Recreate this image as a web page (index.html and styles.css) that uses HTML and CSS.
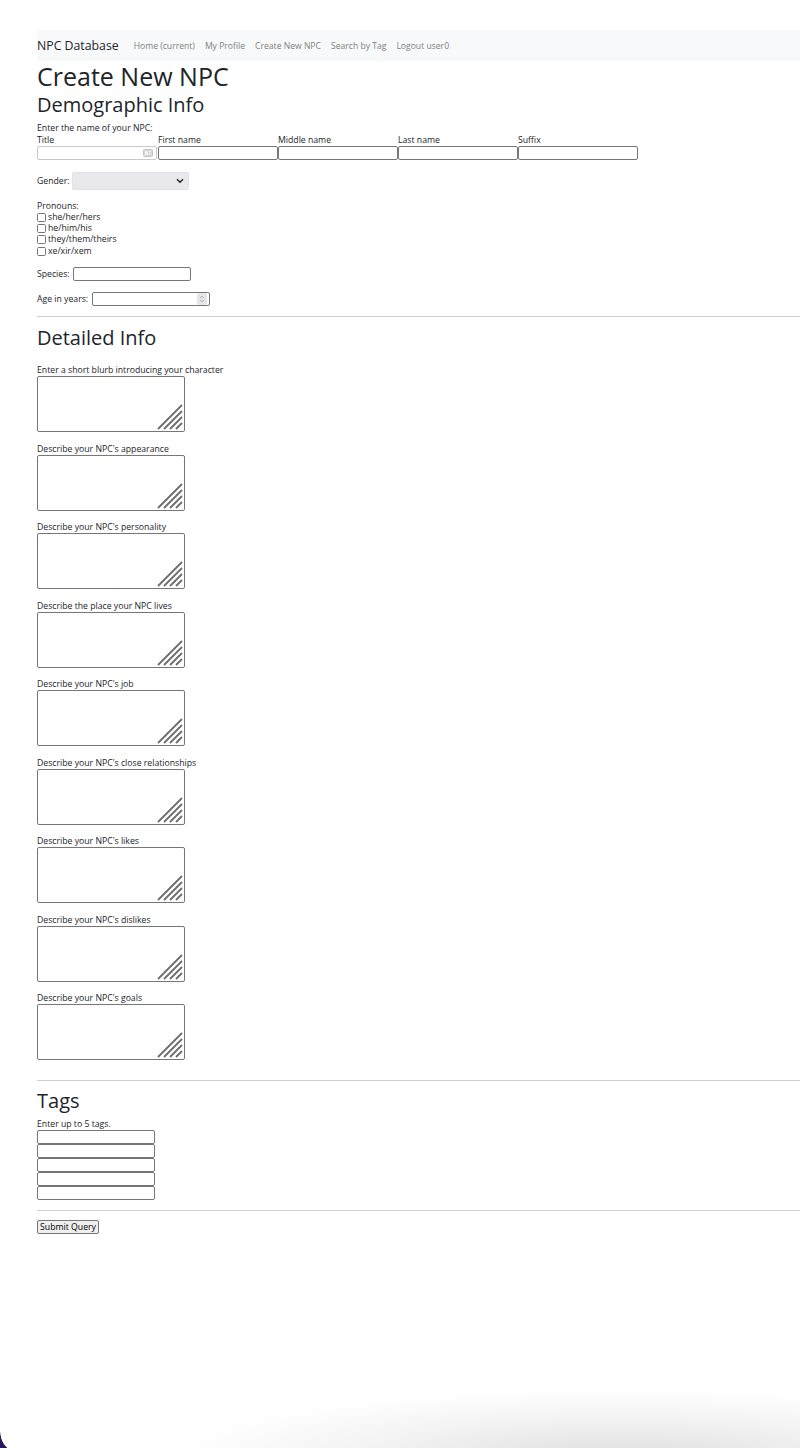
FILE: index.html
```html
<!DOCTYPE html>
<html lang="en">
<head>
<meta charset="utf-8">
<title>Create New NPC</title>
<link rel="stylesheet" href="styles.css">
</head>
<body>
<div class="page">
  <nav class="navbar">
    <span class="brand">NPC Database</span>
    <span class="nav-link">Home (current)</span>
    <span class="nav-link">My Profile</span>
    <span class="nav-link">Create New NPC</span>
    <span class="nav-link">Search by Tag</span>
    <span class="nav-link">Logout user0</span>
  </nav>

  <h1 class="title">Create New NPC</h1>
  <h2 class="section first">Demographic Info</h2>

  <div class="line">Enter the name of your NPC:</div>
  <div class="name-grid">
    <div class="name-col">
      <div class="line">Title</div>
      <div class="field title-field">
        <svg class="autofill" width="10" height="8" viewBox="0 0 10 8"><rect x="0.5" y="0.5" width="9" height="7" rx="1" fill="#d8d8d8" stroke="#c4c4c4"/><rect x="2" y="2" width="3" height="4" fill="#f2f2f2"/><rect x="6" y="2" width="2" height="1" fill="#f2f2f2"/><rect x="6" y="4" width="2" height="1" fill="#f2f2f2"/></svg>
      </div>
    </div>
    <div class="name-col"><div class="line">First name</div><div class="field name"></div></div>
    <div class="name-col"><div class="line">Middle name</div><div class="field name"></div></div>
    <div class="name-col"><div class="line">Last name</div><div class="field name"></div></div>
    <div class="name-col"><div class="line">Suffix</div><div class="field name"></div></div>
  </div>

  <div class="row gender-row">
    <span class="row-label">Gender:</span>
    <div class="select">
      <svg class="chevron" width="8" height="6" viewBox="0 0 8 6"><path d="M1 1.2 L4 4.2 L7 1.2" fill="none" stroke="#222" stroke-width="1.4"/></svg>
    </div>
  </div>

  <div class="pronouns">
    <div class="pline">Pronouns:</div>
    <div class="pline"><span class="check"></span>she/her/hers</div>
    <div class="pline"><span class="check"></span>he/him/his</div>
    <div class="pline"><span class="check"></span>they/them/theirs</div>
    <div class="pline"><span class="check"></span>xe/xir/xem</div>
  </div>

  <div class="row species-row">
    <span class="row-label">Species:</span>
    <div class="field short"></div>
  </div>

  <div class="row age-row">
    <span class="row-label">Age in years:</span>
    <div class="field short number">
      <svg class="spinner" width="10" height="12" viewBox="0 0 10 12"><rect x="0" y="0" width="10" height="12" rx="2" fill="#e6e6ea"/><path d="M3.2 5 L5 3.2 L6.8 5" fill="none" stroke="#9a9a9a" stroke-width="0.8"/><path d="M3.2 7 L5 8.8 L6.8 7" fill="none" stroke="#9a9a9a" stroke-width="0.8"/></svg>
    </div>
  </div>

  <hr class="rule rule-1">

  <h2 class="section detailed">Detailed Info</h2>

  <div class="areas">
    <div class="area-block"><div class="aline">Enter a short blurb introducing your character</div><div class="textarea"><svg class="grip" width="26" height="26" viewBox="0 0 26 26"><path d="M1 25 L25 1 M7 25 L25 7 M13 25 L25 13 M19 25 L25 19" stroke="#6e6e6e" stroke-width="1.8" fill="none"/></svg></div></div>
    <div class="area-block"><div class="aline">Describe your NPC's appearance</div><div class="textarea"><svg class="grip" width="26" height="26" viewBox="0 0 26 26"><path d="M1 25 L25 1 M7 25 L25 7 M13 25 L25 13 M19 25 L25 19" stroke="#6e6e6e" stroke-width="1.8" fill="none"/></svg></div></div>
    <div class="area-block"><div class="aline">Describe your NPC's personality</div><div class="textarea"><svg class="grip" width="26" height="26" viewBox="0 0 26 26"><path d="M1 25 L25 1 M7 25 L25 7 M13 25 L25 13 M19 25 L25 19" stroke="#6e6e6e" stroke-width="1.8" fill="none"/></svg></div></div>
    <div class="area-block"><div class="aline">Describe the place your NPC lives</div><div class="textarea"><svg class="grip" width="26" height="26" viewBox="0 0 26 26"><path d="M1 25 L25 1 M7 25 L25 7 M13 25 L25 13 M19 25 L25 19" stroke="#6e6e6e" stroke-width="1.8" fill="none"/></svg></div></div>
    <div class="area-block"><div class="aline">Describe your NPC's job</div><div class="textarea"><svg class="grip" width="26" height="26" viewBox="0 0 26 26"><path d="M1 25 L25 1 M7 25 L25 7 M13 25 L25 13 M19 25 L25 19" stroke="#6e6e6e" stroke-width="1.8" fill="none"/></svg></div></div>
    <div class="area-block"><div class="aline">Describe your NPC's close relationships</div><div class="textarea"><svg class="grip" width="26" height="26" viewBox="0 0 26 26"><path d="M1 25 L25 1 M7 25 L25 7 M13 25 L25 13 M19 25 L25 19" stroke="#6e6e6e" stroke-width="1.8" fill="none"/></svg></div></div>
    <div class="area-block"><div class="aline">Describe your NPC's likes</div><div class="textarea"><svg class="grip" width="26" height="26" viewBox="0 0 26 26"><path d="M1 25 L25 1 M7 25 L25 7 M13 25 L25 13 M19 25 L25 19" stroke="#6e6e6e" stroke-width="1.8" fill="none"/></svg></div></div>
    <div class="area-block"><div class="aline">Describe your NPC's dislikes</div><div class="textarea"><svg class="grip" width="26" height="26" viewBox="0 0 26 26"><path d="M1 25 L25 1 M7 25 L25 7 M13 25 L25 13 M19 25 L25 19" stroke="#6e6e6e" stroke-width="1.8" fill="none"/></svg></div></div>
    <div class="area-block"><div class="aline">Describe your NPC's goals</div><div class="textarea"><svg class="grip" width="26" height="26" viewBox="0 0 26 26"><path d="M1 25 L25 1 M7 25 L25 7 M13 25 L25 13 M19 25 L25 19" stroke="#6e6e6e" stroke-width="1.8" fill="none"/></svg></div></div>
  </div>

  <hr class="rule rule-2">

  <h2 class="section tags-title">Tags</h2>
  <div class="aline">Enter up to 5 tags.</div>
  <div class="tags">
    <div class="field tag"></div>
    <div class="field tag"></div>
    <div class="field tag"></div>
    <div class="field tag"></div>
    <div class="field tag"></div>
  </div>

  <hr class="rule rule-3">

  <button class="submit" type="button">Submit Query</button>
</div>
<div class="corner"></div>
<div class="shadow"></div>
</body>
</html>
```

FILE: styles.css
```css
html, body {
  margin: 0;
  padding: 0;
  background: #ffffff;
}
body {
  font-family: "Open Sans", "DejaVu Sans", sans-serif;
  font-size: 8.7px;
  color: #212529;
  height: 1448px;
  overflow: hidden;
  position: relative;
}
.page {
  padding: 30px 0 0 37px;
}
.navbar {
  height: 31px;
  background: #f8f9fa;
  display: flex;
  align-items: center;
  gap: 10px;
}
.brand {
  font-size: 12.3px;
  color: #212529;
  margin-right: 5px;
}
.nav-link {
  font-size: 8.6px;
  color: #808080;
}
.title {
  margin: 0;
  font-size: 25px;
  font-weight: 400;
  line-height: 30px;
  color: #212529;
}
.section {
  margin: 0;
  font-size: 20px;
  font-weight: 400;
  line-height: 24px;
  color: #212529;
}
.section.first {
  margin-top: 2px;
  margin-bottom: 5px;
}
.line {
  line-height: 12px;
  height: 12px;
  white-space: nowrap;
}
.name-grid {
  display: grid;
  grid-template-columns: 121px 120px 120px 120px 120px;
}
.field {
  box-sizing: border-box;
  width: 119px;
  height: 14px;
  border: 1px solid #767676;
  border-radius: 2px;
  background: #fff;
  position: relative;
}
.field.name {
  width: 120px;
}
.title-field {
  width: 120px;
  border-color: #c9c9c9;
}
.autofill {
  position: absolute;
  right: 3px;
  top: 2px;
}
.row {
  display: flex;
  align-items: center;
  gap: 3px;
}
.row-label {
  white-space: nowrap;
}
.gender-row {
  margin-top: 12px;
  height: 18px;
  gap: 2px;
}
.select {
  width: 117px;
  height: 18px;
  background: #e9e9ed;
  border-radius: 2px;
  position: relative;
  box-sizing: border-box;
  border: 1px solid #e2e2e6;
}
.chevron {
  position: absolute;
  right: 4px;
  top: 5px;
}
.pronouns {
  margin-top: 10.5px;
}
.pline {
  line-height: 11.25px;
  height: 11.25px;
  display: flex;
  align-items: center;
  white-space: nowrap;
}
.check {
  box-sizing: border-box;
  width: 9px;
  height: 9px;
  border: 1px solid #767676;
  border-radius: 1.5px;
  margin-right: 2px;
  background: #fff;
}
.species-row {
  margin-top: 10.25px;
  height: 14px;
}
.field.short {
  width: 118px;
}
.age-row {
  margin-top: 11px;
  height: 14px;
  gap: 4px;
}
.spinner {
  position: absolute;
  right: 2px;
  top: 0px;
}
.rule {
  margin: 0;
  border: 0;
  border-top: 1px solid #cfcfcf;
  height: 0;
}
.rule-1 {
  margin-top: 10px;
}
.section.detailed {
  margin-top: 9px;
  margin-bottom: 15px;
}
.aline {
  line-height: 11px;
  height: 11px;
  white-space: nowrap;
}
.area-block {
  margin-bottom: 11.5px;
}
.area-block:last-child {
  margin-bottom: 0;
}
.textarea {
  box-sizing: border-box;
  width: 148px;
  height: 56px;
  border: 1px solid #767676;
  border-radius: 2px;
  position: relative;
  background: #fff;
}
.grip {
  position: absolute;
  right: 1px;
  bottom: 1px;
}
.rule-2 {
  margin-top: 20px;
}
.section.tags-title {
  margin-top: 8px;
  margin-bottom: 5.5px;
}
.tags {
  display: flex;
  flex-direction: column;
}
.field.tag {
  width: 118px;
}
.rule-3 {
  margin-top: 10px;
}
.submit {
  margin-top: 9px;
  font-family: "Open Sans", "DejaVu Sans", sans-serif;
  font-size: 8.7px;
  color: #000;
  height: 14px;
  width: 62px;
  padding: 0;
  line-height: 12px;
  background: #efefef;
  border: 1px solid #767676;
  border-radius: 2px;
  display: block;
}
.corner {
  position: absolute;
  left: 0;
  bottom: 0;
  width: 22px;
  height: 16px;
  background: radial-gradient(circle 22px at 22px 0, rgba(42, 23, 96, 0) 21.4px, #2a1760 22px);
}
.shadow {
  position: absolute;
  right: 0;
  bottom: 0;
  width: 600px;
  height: 70px;
  background: radial-gradient(ellipse 75% 100% at 70% 115%, rgba(0, 0, 0, 0.13), rgba(0, 0, 0, 0.05) 55%, rgba(0, 0, 0, 0) 100%);
  pointer-events: none;
}
```
